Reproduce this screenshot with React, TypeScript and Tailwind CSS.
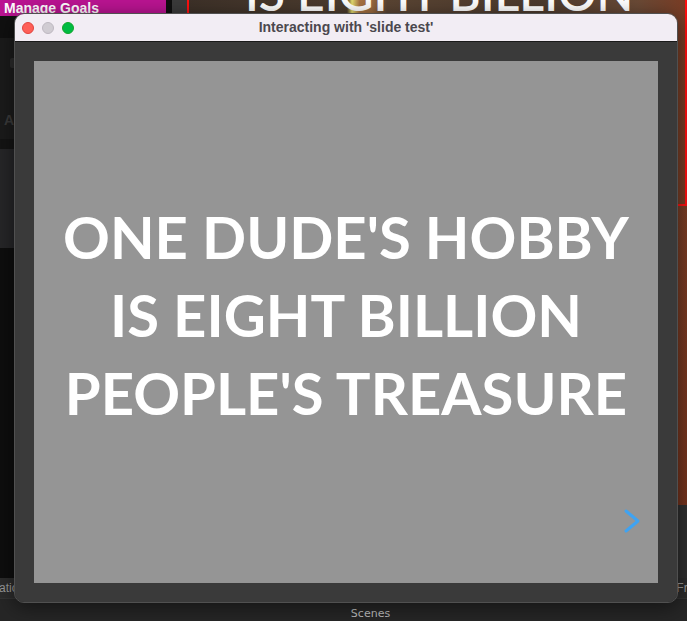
import React from 'react';

const sans = { fontFamily: '"Liberation Sans", Arial, sans-serif' };

const Background = () => {
  return (
    <div className="flex h-full w-full flex-col">
      <div className="flex h-[578px] flex-row">
        {/* left dock column */}
        <div className="flex w-[187px] flex-col">
          <div className="flex h-[16px] flex-row">
            <div className="flex w-[166px] items-start bg-[#bb1492] pl-[4px]">
              <span className="mt-[-1px] text-[14px] leading-[18px] font-bold text-white" style={sans}>
                Manage Goals
              </span>
            </div>
            <div className="w-[6px] bg-[#0f0f0f]" />
            <div className="w-[15px] bg-[#3b3b3b]" />
          </div>
          <div className="h-[22px] bg-[#101010]" />
          <div className="relative h-[101px] bg-[#1b1b1b]">
            <div className="absolute top-[20px] left-[10px] h-[10px] w-[8px] rounded-[2px] bg-[#2c2c2c]" />
            <span className="absolute top-[72px] left-[4px] text-[14px] font-bold text-[#3a3a3a]" style={sans}>
              A
            </span>
          </div>
          <div className="h-[10px] bg-[#141414]" />
          <div className="h-[99px] bg-[#262628]" />
          <div className="flex-1 bg-[#0e0e0e]" />
        </div>
        {/* right preview column */}
        <div className="flex flex-1 flex-col">
          <div className="relative h-[505px] overflow-hidden bg-[linear-gradient(90deg,#3d3128_0%,#4b3b2e_30%,#4a3a2c_32%,#e2dc6e_33%,#a97443_34.5%,#9a6a3f_37%,#5a4433_40%,#4b3a2d_70%,#6a4a36_90%,#7a3c24_100%)]">
            <div className="absolute inset-0 bg-[linear-gradient(180deg,rgba(0,0,0,0)_40%,rgba(110,40,20,0.5)_100%)]" />
            <div
              className="absolute top-[-31px] left-[58px] text-[48px] leading-none font-semibold whitespace-nowrap text-white"
              style={{ fontFamily: 'Lato, "Open Sans", sans-serif' }}
            >
              IS EIGHT BILLION
            </div>
            <div className="absolute top-[-10px] left-0 h-[216px] w-[500px] border-2 border-[#ff1010]" />
          </div>
          <div className="flex-1 bg-[#2f2f2f]" />
        </div>
      </div>
      <div className="flex h-[20px] flex-row items-center justify-between bg-[#2c2c2c] text-[12px] text-[#9a9a9a]" style={sans}>
        <span className="-ml-[1px]">ation</span>
        <span className="mr-[-14px]">Free</span>
      </div>
      <div className="flex h-[23px] flex-row items-end justify-center border-t border-[#333] bg-[#262626] pb-[1px]">
        <span className="ml-[54px] text-[11px] leading-[13px] text-[#bdbdbd]" style={{ fontFamily: '"DejaVu Sans", sans-serif' }}>
          Scenes
        </span>
      </div>
    </div>
  );
};

const SlideWindow = () => {
  return (
    <div className="absolute top-[13px] left-[14px] flex h-[590px] w-[664px] flex-col overflow-hidden rounded-[10px] border border-[#505050] shadow-[0_4px_20px_rgba(0,0,0,0.5)]">
      <div className="relative flex h-[28px] flex-row items-center justify-center bg-[#f2edf4]">
        <div className="absolute top-[8px] left-[7px] flex flex-row gap-[8px]">
          <div className="h-[12px] w-[12px] rounded-full border border-[#e0443e] bg-[#fe5f57]" />
          <div className="h-[12px] w-[12px] rounded-full border border-[#bdb8c0] bg-[#d0ccd2]" />
          <div className="h-[12px] w-[12px] rounded-full border border-[#12a62a] bg-[#00bb42]" />
        </div>
        <p className="text-[14px] font-bold text-[#4b484e]" style={sans}>
          Interacting with 'slide test'
        </p>
      </div>
      <div className="h-px bg-[#1a1a1a]" />
      <div className="flex flex-1 bg-[#3a3a3a] px-[19px] pt-[19px] pb-[19px]">
        <div className="relative flex h-[522px] w-[624px] items-center justify-center bg-[#959595] pb-[14px]">
          <p
            className="text-center text-[58px] leading-[78px] font-bold text-white"
            style={{ fontFamily: 'Lato, "Open Sans", sans-serif' }}
          >
            ONE DUDE'S HOBBY
            <br />
            IS EIGHT BILLION
            <br />
            PEOPLE'S TREASURE
          </p>
          <svg className="absolute right-[17px] bottom-[49px]" width="18" height="26" viewBox="0 0 18 26">
            <path d="M3 3 L15 13 L3 23" fill="none" stroke="#3fa3f2" strokeWidth="3" strokeLinecap="round" strokeLinejoin="round" />
          </svg>
        </div>
      </div>
    </div>
  );
};

const App = () => {
  return (
    <div className="relative h-[621px] w-[687px] overflow-hidden bg-[#0e0e0e]">
      <Background />
      <SlideWindow />
    </div>
  );
};

export default App;
